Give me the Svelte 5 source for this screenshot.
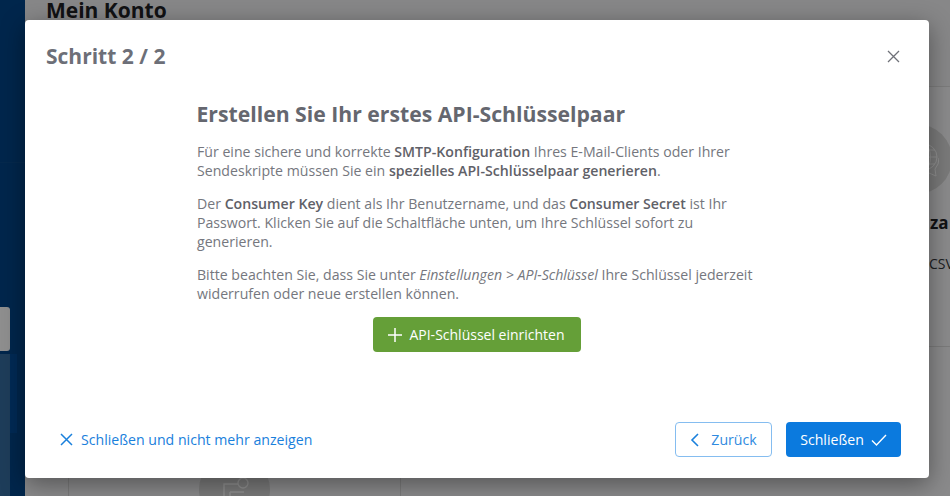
<script>
	const footerClose = 'Schließen und nicht mehr anzeigen';
</script>

<div class="page">
	<aside class="sidebar">
		<div class="side-top"></div>
		<div class="side-tab"></div>
		<div class="side-lower">
			<div class="side-panel"></div>
			<div class="side-strip"></div>
		</div>
	</aside>
	<main class="content">
		<header class="topbar"><h1>Mein Konto</h1></header>
		<div class="cards">
			<div class="left-card">
				<div class="round bottom">
					<svg width="34" height="26" viewBox="0 0 34 26" fill="none" stroke="#ffffff" stroke-width="1.4">
						<path d="M6 25V6h14M12 14h14M12 14v11" />
						<circle cx="25" cy="5" r="5" />
					</svg>
				</div>
			</div>
			<div class="right-card">
				<div class="round globe">
					<svg width="44" height="44" viewBox="0 0 44 44" fill="none" stroke="#ffffff" stroke-width="1">
						<circle cx="29" cy="20" r="13" />
						<ellipse cx="29" cy="20" rx="6.5" ry="13" />
						<path d="M16 20h26M18 13h22M18 27h22" />
						<path d="M44 21a16 16 0 0 1-4 11l1 7-7-3" />
					</svg>
				</div>
				<strong class="za">za</strong>
				<span class="csv">CSV</span>
			</div>
		</div>
	</main>
	<div class="backdrop"></div>

	<div class="modal">
		<div class="modal-head">
			<h2>Schritt 2 / 2</h2>
			<button class="close" aria-label="Schließen">
				<svg width="13" height="13" viewBox="0 0 13 13" fill="none" stroke="#6f7178" stroke-width="1.3">
					<path d="M1 1l11 11M12 1L1 12" />
				</svg>
			</button>
		</div>
		<div class="modal-body">
			<h3>Erstellen Sie Ihr erstes API-Schlüsselpaar</h3>
			<p>
				Für eine sichere und korrekte <b>SMTP-Konfiguration</b> Ihres E-Mail-Clients oder Ihrer
				Sendeskripte müssen Sie ein <b>spezielles API-Schlüsselpaar generieren</b>.
			</p>
			<p>
				Der <b>Consumer Key</b> dient als Ihr Benutzername, und das <b>Consumer Secret</b> ist Ihr
				Passwort. Klicken Sie auf die Schaltfläche unten, um Ihre Schlüssel sofort zu generieren.
			</p>
			<p>
				Bitte beachten Sie, dass Sie unter <i>Einstellungen &gt; API-Schlüssel</i> Ihre Schlüssel jederzeit
				widerrufen oder neue erstellen können.
			</p>
			<div class="action">
				<button class="btn green">
					<svg width="14" height="14" viewBox="0 0 14 14" fill="none" stroke="#fff" stroke-width="1.5">
						<path d="M7 0v14M0 7h14" />
					</svg>
					API-Schlüssel einrichten
				</button>
			</div>
		</div>
		<div class="modal-foot">
			<button class="link">
				<svg width="13" height="13" viewBox="0 0 13 13" fill="none" stroke="#1a80dc" stroke-width="1.5">
					<path d="M1 1l11 11M12 1L1 12" />
				</svg>
				{footerClose}
			</button>
			<div class="foot-btns">
				<button class="btn outline">
					<svg width="9" height="14" viewBox="0 0 9 14" fill="none" stroke="#1a80dc" stroke-width="1.6">
						<path d="M8 1L2 7l6 6" />
					</svg>
					Zurück
				</button>
				<button class="btn primary">
					Schließen
					<svg width="16" height="12" viewBox="0 0 16 12" fill="none" stroke="#fff" stroke-width="1.4">
						<path d="M1 6.5L5.5 11 15 1" />
					</svg>
				</button>
			</div>
		</div>
	</div>
</div>

<style>
	:global(body) {
		margin: 0;
	}

	.page {
		position: relative;
		width: 950px;
		height: 496px;
		overflow: hidden;
		display: flex;
		font-family: 'Open Sans', sans-serif;
		background: #ffffff;
	}

	.sidebar {
		width: 25px;
		flex: none;
		display: flex;
		flex-direction: column;
		background: #004488;
	}

	.side-top {
		height: 163px;
		border-bottom: 1px solid #0a4a8a;
		box-sizing: border-box;
	}

	.side-tab {
		height: 44px;
		width: 10px;
		margin-top: 144px;
		background: #ffffff;
		border-radius: 0 3px 3px 0;
	}

	.side-lower {
		flex: 1;
		margin-top: 3px;
		display: flex;
		align-items: flex-start;
	}

	.side-panel {
		width: 10px;
		height: 100%;
		background: #366da0;
	}

	.side-strip {
		width: 7px;
		height: 79px;
		background: #004c98;
	}

	.content {
		flex: 1;
		display: flex;
		flex-direction: column;
		background: #f7f7f8;
	}

	.topbar {
		height: 87px;
		flex: none;
		padding-left: 21px;
		background: #f0f1f3;
		border-bottom: 1px solid #dddddd;
		box-sizing: border-box;
	}

	h1 {
		margin: 0;
		font-size: 21px;
		line-height: 21px;
		font-weight: 700;
		color: #1f2125;
	}

	.cards {
		flex: 1;
		position: relative;
		display: flex;
		justify-content: space-between;
	}

	.left-card {
		width: 333px;
		margin-left: 43px;
		border-left: 1px solid #dcdcdc;
		border-right: 1px solid #dcdcdc;
		box-sizing: border-box;
		display: flex;
		justify-content: center;
		align-items: flex-end;
	}

	.round {
		border-radius: 50%;
		background: #d9d9d9;
		display: flex;
		align-items: center;
		justify-content: center;
	}

	.round.bottom {
		width: 71px;
		height: 71px;
		margin-bottom: -29px;
		align-items: flex-start;
		padding-top: 24px;
		box-sizing: border-box;
	}

	.right-card {
		position: absolute;
		left: 860px;
		top: 0;
		width: 80px;
		height: 259px;
		border-bottom: 1px solid #dcdcdc;
	}

	.round.globe {
		position: absolute;
		left: -3px;
		top: 37px;
		width: 70px;
		height: 70px;
	}

	.za {
		position: absolute;
		left: 45px;
		top: 125px;
		font-size: 17px;
		line-height: 22px;
		color: #1f2125;
	}

	.csv {
		position: absolute;
		left: 44px;
		top: 167px;
		font-size: 14px;
		line-height: 19px;
		color: #33363b;
	}

	.backdrop {
		position: absolute;
		inset: 0;
		background: rgba(0, 0, 0, 0.44);
	}

	.modal {
		position: absolute;
		left: 25px;
		top: 20px;
		width: 904px;
		height: 458px;
		background: #ffffff;
		border-radius: 4px;
		box-shadow: 0 6px 24px rgba(0, 0, 0, 0.4);
		display: flex;
		flex-direction: column;
		box-sizing: border-box;
	}

	.modal-head {
		display: flex;
		justify-content: space-between;
		align-items: center;
		padding: 20px 29px 0 21px;
		height: 52px;
		flex: none;
		box-sizing: border-box;
	}

	h2 {
		margin: 0;
		font-size: 21px;
		line-height: 32px;
		font-weight: 700;
		color: #6d6f78;
	}

	.close {
		background: none;
		border: 0;
		padding: 0;
		display: flex;
	}

	.modal-body {
		flex: 1;
		width: 565px;
		margin-left: 172px;
		padding-top: 24px;
		color: #75777e;
		font-size: 14.13px;
		line-height: 19px;
	}

	h3 {
		margin: 4px 0 14px;
		margin-left: -0.5px;
		font-size: 21.2px;
		line-height: 28px;
		font-weight: 700;
		color: #65676f;
	}

	p {
		margin: 0 0 14px;
	}

	p b {
		font-weight: 600;
		color: #5f6168;
	}

	.action {
		display: flex;
		justify-content: center;
		width: 559px;
		margin-top: 14px;
	}

	.btn {
		display: inline-flex;
		align-items: center;
		justify-content: center;
		gap: 7px;
		height: 35px;
		border-radius: 4px;
		box-sizing: border-box;
		font-family: inherit;
		font-size: 14.13px;
		font-weight: 400;
		border: 1px solid transparent;
		padding: 0;
	}

	.green {
		width: 208px;
		background: #659f38;
		color: #ffffff;
		font-weight: 500;
		font-size: 14px;
	}

	.modal-foot {
		display: flex;
		justify-content: space-between;
		align-items: center;
		height: 35px;
		flex: none;
		padding: 0 28px 0 35px;
		margin-bottom: 21px;
	}

	.link {
		display: inline-flex;
		align-items: center;
		gap: 8px;
		background: none;
		border: 0;
		padding: 0;
		color: #1a80dc;
		font-family: inherit;
		font-size: 14.13px;
	}

	.foot-btns {
		display: flex;
		gap: 14px;
	}

	.outline {
		width: 97px;
		background: #ffffff;
		color: #2f8ae0;
		border-color: #85bdf0;
		gap: 12px;
	}

	.primary {
		width: 115px;
		background: #0b7ade;
		color: #ffffff;
	}
</style>
